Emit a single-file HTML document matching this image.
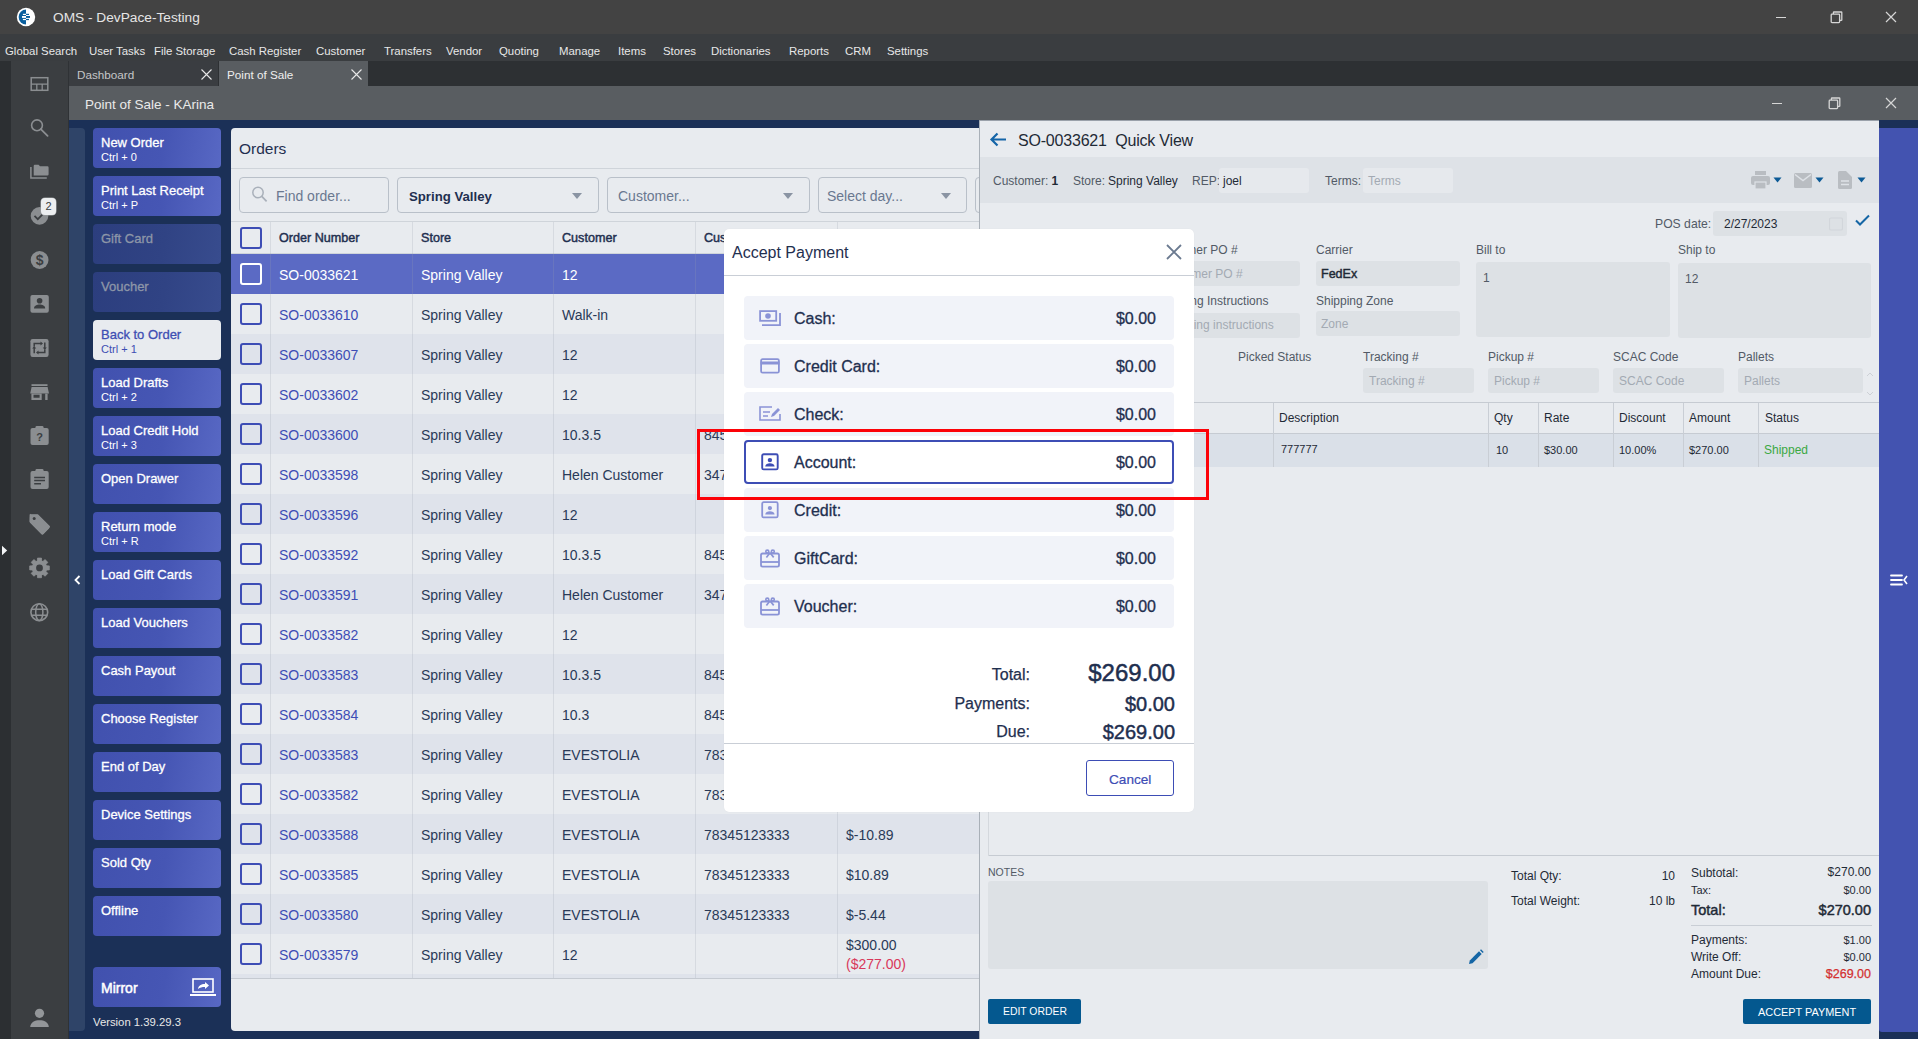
<!DOCTYPE html><html><head><meta charset="utf-8"><style>
*{margin:0;padding:0;box-sizing:border-box}
html,body{width:1918px;height:1039px;overflow:hidden;background:#1b3057;font-family:"Liberation Sans",sans-serif}
.abs{position:absolute}
.t{position:absolute;white-space:nowrap}
</style></head><body><div class="abs" style="left:0px;top:0px;width:1918px;height:34px;background:#434343"></div>
<svg class="abs" style="left:16px;top:7px" width="20" height="20" viewBox="0 0 20 20">
<circle cx="10" cy="10" r="9.2" fill="#fff"/>
<path d="M10 2.6 A7.4 7.4 0 0 0 10 17.4 Z" fill="#0a5f9e"/>
<rect x="6.9" y="6.8" width="3.1" height="1.2" fill="#fff"/><rect x="6" y="9" width="4" height="1.9" fill="#fff"/><rect x="6.9" y="11.9" width="3.1" height="1.2" fill="#fff"/>
<rect x="10" y="6.8" width="3" height="1.2" fill="#0a5f9e"/><rect x="10" y="9" width="4" height="1.9" fill="#0a5f9e"/><rect x="10" y="11.9" width="3" height="1.2" fill="#0a5f9e"/>
</svg>
<div class="t" style="left:53px;top:9.15px;line-height:17.7px;font-size:13.7px;color:#e6e6e6;font-weight:normal;">OMS - DevPace-Testing</div>
<div class="abs" style="left:1776px;top:16.5px;width:10px;height:1.5px;background:#d6d6d6"></div>
<svg class="abs" style="left:1830px;top:11px" width="13" height="13" viewBox="0 0 13 13"><rect x="1.2" y="3.2" width="8.4" height="8.4" rx="0.8" fill="none" stroke="#d6d6d6" stroke-width="1.3"/><path d="M3.4 3V1.5Q3.4 1 4 1H11.3Q11.8 1 11.8 1.6V8.9Q11.8 9.4 11.2 9.4H9.8" fill="none" stroke="#d6d6d6" stroke-width="1.3"/></svg>
<svg class="abs" style="left:1885px;top:11px" width="12" height="12" viewBox="0 0 12 12"><path d="M1 1L11 11M11 1L1 11" stroke="#d6d6d6" stroke-width="1.2"/></svg>
<div class="abs" style="left:0px;top:34px;width:1918px;height:27px;background:#3a3d40"></div>
<div class="t" style="left:5px;top:43.8px;line-height:15.4px;font-size:11.4px;color:#e8e8e8;font-weight:normal;">Global Search</div>
<div class="t" style="left:89px;top:43.8px;line-height:15.4px;font-size:11.4px;color:#e8e8e8;font-weight:normal;">User Tasks</div>
<div class="t" style="left:154px;top:43.8px;line-height:15.4px;font-size:11.4px;color:#e8e8e8;font-weight:normal;">File Storage</div>
<div class="t" style="left:229px;top:43.8px;line-height:15.4px;font-size:11.4px;color:#e8e8e8;font-weight:normal;">Cash Register</div>
<div class="t" style="left:316px;top:43.8px;line-height:15.4px;font-size:11.4px;color:#e8e8e8;font-weight:normal;">Customer</div>
<div class="t" style="left:384px;top:43.8px;line-height:15.4px;font-size:11.4px;color:#e8e8e8;font-weight:normal;">Transfers</div>
<div class="t" style="left:446px;top:43.8px;line-height:15.4px;font-size:11.4px;color:#e8e8e8;font-weight:normal;">Vendor</div>
<div class="t" style="left:499px;top:43.8px;line-height:15.4px;font-size:11.4px;color:#e8e8e8;font-weight:normal;">Quoting</div>
<div class="t" style="left:559px;top:43.8px;line-height:15.4px;font-size:11.4px;color:#e8e8e8;font-weight:normal;">Manage</div>
<div class="t" style="left:618px;top:43.8px;line-height:15.4px;font-size:11.4px;color:#e8e8e8;font-weight:normal;">Items</div>
<div class="t" style="left:663px;top:43.8px;line-height:15.4px;font-size:11.4px;color:#e8e8e8;font-weight:normal;">Stores</div>
<div class="t" style="left:711px;top:43.8px;line-height:15.4px;font-size:11.4px;color:#e8e8e8;font-weight:normal;">Dictionaries</div>
<div class="t" style="left:789px;top:43.8px;line-height:15.4px;font-size:11.4px;color:#e8e8e8;font-weight:normal;">Reports</div>
<div class="t" style="left:845px;top:43.8px;line-height:15.4px;font-size:11.4px;color:#e8e8e8;font-weight:normal;">CRM</div>
<div class="t" style="left:887px;top:43.8px;line-height:15.4px;font-size:11.4px;color:#e8e8e8;font-weight:normal;">Settings</div>
<div class="abs" style="left:0px;top:61px;width:11px;height:978px;background:#2c2f32"></div>
<div class="abs" style="left:11px;top:61px;width:58px;height:978px;background:#3b3e41"></div>
<div class="abs" style="left:68px;top:61px;width:1px;height:978px;background:#2f3235"></div>
<svg class="abs" style="left:0px;top:540px" width="11" height="20" viewBox="0 0 11 20"><path d="M2 5.7L7.2 10.5L2 15.2Z" fill="#f2f4f6"/></svg>
<div class="abs" style="left:69px;top:61px;width:1849px;height:25px;background:#2d3033"></div>
<div class="abs" style="left:69px;top:61px;width:149px;height:25px;background:#3a3d41"></div>
<div class="abs" style="left:219px;top:61px;width:149px;height:25px;background:#595d61"></div>
<div class="t" style="left:77px;top:67.15px;line-height:15.7px;font-size:11.7px;color:#c4c6c8;font-weight:normal;">Dashboard</div>
<div class="t" style="left:227px;top:67.15px;line-height:15.7px;font-size:11.7px;color:#eeeeee;font-weight:normal;">Point of Sale</div>
<svg class="abs" style="left:201px;top:69px" width="11" height="11" viewBox="0 0 11 11"><path d="M0.5 0.5L10.5 10.5M10.5 0.5L0.5 10.5" stroke="#e8e8e8" stroke-width="1.1"/></svg>
<svg class="abs" style="left:351px;top:69px" width="11" height="11" viewBox="0 0 11 11"><path d="M0.5 0.5L10.5 10.5M10.5 0.5L0.5 10.5" stroke="#e8e8e8" stroke-width="1.1"/></svg>
<div class="abs" style="left:69px;top:86px;width:1849px;height:34px;background:#595d61"></div>
<div class="t" style="left:85px;top:96.25px;line-height:17.5px;font-size:13.5px;color:#eaeaea;font-weight:normal;">Point of Sale - KArina</div>
<div class="abs" style="left:1772px;top:102.5px;width:10px;height:1.5px;background:#d6d6d6"></div>
<svg class="abs" style="left:1828px;top:97px" width="13" height="13" viewBox="0 0 13 13"><rect x="1.2" y="3.2" width="8.4" height="8.4" rx="0.8" fill="none" stroke="#d6d6d6" stroke-width="1.3"/><path d="M3.4 3V1.5Q3.4 1 4 1H11.3Q11.8 1 11.8 1.6V8.9Q11.8 9.4 11.2 9.4H9.8" fill="none" stroke="#d6d6d6" stroke-width="1.3"/></svg>
<svg class="abs" style="left:1885px;top:97px" width="12" height="12" viewBox="0 0 12 12"><path d="M1 1L11 11M11 1L1 11" stroke="#d6d6d6" stroke-width="1.2"/></svg>
<div class="abs" style="left:69px;top:120px;width:1849px;height:919px;background:#1b3057"></div>
<svg class="abs" style="left:0;top:0" width="69" height="640" viewBox="0 0 69 640">
<rect x="31.2" y="77.7" width="16.6" height="12.6" fill="none" stroke="#8b8e91" stroke-width="1.5"/>
<path d="M31 84.2H48M36.8 84V90.5M42.2 84V90.5" stroke="#8b8e91" stroke-width="1.3"/>
<circle cx="37" cy="125.3" r="5.4" fill="none" stroke="#8b8e91" stroke-width="1.6"/>
<path d="M40.8 129.1L47.6 135.9" stroke="#8b8e91" stroke-width="1.8" stroke-linecap="round"/>
<path d="M33.7 166Q33.7 164.8 34.9 164.8H38.6L40 166.2H47.4Q48.6 166.2 48.6 167.4V174.3Q48.6 175.5 47.4 175.5H33.7Z" fill="#8b8e91"/>
<path d="M30.9 167V177.9H46.8" fill="none" stroke="#8b8e91" stroke-width="1.5"/>
<circle cx="39.5" cy="215.9" r="8.8" fill="#8b8e91"/>
<path d="M34.5 215.8L37.8 219.2L43.8 213.2" fill="none" stroke="#3b3e41" stroke-width="1.7"/>
<circle cx="39.6" cy="260" r="8.9" fill="#8b8e91"/>
<text x="39.6" y="265.3" font-size="14" text-anchor="middle" fill="#3b3e41" font-family="Liberation Sans" font-weight="bold">$</text>
<rect x="30.4" y="295" width="18.4" height="17.7" rx="2" fill="#8b8e91"/>
<circle cx="39.6" cy="300.8" r="2.8" fill="#3b3e41"/>
<path d="M34 308.6C34 305.6 37 304.6 39.6 304.6C42.2 304.6 45.2 305.6 45.2 308.6Z" fill="#3b3e41"/>
<rect x="30.4" y="339" width="18.2" height="17.9" rx="2.2" fill="#8b8e91"/>
<path d="M34.2 346.5V343.4H41" fill="none" stroke="#3b3e41" stroke-width="1.5"/><path d="M40.5 341.4L43 343.4L40.5 345.4Z" fill="#3b3e41"/>
<path d="M44.8 342.6V348" fill="none" stroke="#3b3e41" stroke-width="1.5"/><path d="M42.8 347.4L44.8 350L46.8 347.4Z" fill="#3b3e41"/>
<path d="M44.8 349.4V352.5H38" fill="none" stroke="#3b3e41" stroke-width="1.5"/><path d="M38.5 350.5L36 352.5L38.5 354.5Z" fill="#3b3e41"/>
<path d="M34.2 353.3V348" fill="none" stroke="#3b3e41" stroke-width="1.5"/><path d="M32.2 348.6L34.2 346L36.2 348.6Z" fill="#3b3e41"/>
<rect x="31.5" y="384.2" width="16" height="1.8" fill="#8b8e91"/>
<path d="M31.6 386.9H47.6L49 393.6H30.2Z" fill="#8b8e91"/>
<path d="M31.4 393.6H41.7V400H31.4Z M33.5 394.7V397.8H39.6V394.7Z" fill="#8b8e91" fill-rule="evenodd"/>
<rect x="45.2" y="393.6" width="2.4" height="6.4" fill="#8b8e91"/>
<rect x="30.5" y="428" width="18.2" height="17" rx="2" fill="#8b8e91"/>
<rect x="35.5" y="426" width="8" height="4" rx="1.2" fill="#8b8e91"/>
<text x="39.6" y="441" font-size="11" text-anchor="middle" fill="#3b3e41" font-family="Liberation Sans" font-weight="bold">?</text>
<rect x="30.5" y="471" width="18.2" height="18" rx="2" fill="#8b8e91"/>
<rect x="35.5" y="469" width="8" height="4" rx="1.2" fill="#8b8e91"/>
<path d="M34.2 477.4H45M34.2 480.6H45M34.2 483.8H41" stroke="#3b3e41" stroke-width="1.5"/>
<path d="M30.2 516.2Q29 515 30.2 513.8L31.3 514.7H37.5L49 526.2Q50 527.4 49 528.6L43.6 534Q42.4 535 41.2 534L29.8 522.6V516.2Z" fill="#8b8e91"/>
<path d="M30.5 515H37.6L49.2 526.6L42.4 533.6L30.3 521.5Z" fill="#8b8e91" stroke="#8b8e91" stroke-width="1.6" stroke-linejoin="round"/>
<circle cx="34.2" cy="518.6" r="1.5" fill="#3b3e41"/>
<polygon points="37.37,561.02 37.51,558.10 41.49,558.10 41.63,561.02 42.86,561.53 45.03,559.57 47.83,562.37 45.87,564.54 46.38,565.77 49.30,565.91 49.30,569.89 46.38,570.03 45.87,571.26 47.83,573.43 45.03,576.23 42.86,574.27 41.63,574.78 41.49,577.70 37.51,577.70 37.37,574.78 36.14,574.27 33.97,576.23 31.17,573.43 33.13,571.26 32.62,570.03 29.70,569.89 29.70,565.91 32.62,565.77 33.13,564.54 31.17,562.37 33.97,559.57 36.14,561.53" fill="#8b8e91" stroke="#8b8e91" stroke-width="0.8" stroke-linejoin="round"/>
<circle cx="39.5" cy="567.9" r="7.4" fill="#8b8e91"/>
<circle cx="39.5" cy="567.9" r="3.4" fill="#3b3e41"/>
<circle cx="39.3" cy="612.2" r="8.4" fill="none" stroke="#8b8e91" stroke-width="1.6"/>
<ellipse cx="39.3" cy="612.2" rx="3.6" ry="8.4" fill="none" stroke="#8b8e91" stroke-width="1.5"/>
<path d="M31.5 609.2H47.1M31.5 615.2H47.1" stroke="#8b8e91" stroke-width="1.5"/>
</svg>
<div class="abs" style="left:41px;top:198px;width:15px;height:17px;border-radius:4px;background:#eceef0;box-shadow:0 0 0 0.6px #9a9da0;font-size:11px;line-height:17px;text-align:center;color:#3a3d41">2</div>
<svg class="abs" style="left:29px;top:1008px" width="21" height="20" viewBox="0 0 21 20"><circle cx="10.5" cy="5.3" r="4.6" fill="#939699"/><path d="M1.2 19C1.5 14 6 12.2 10.5 12.2C15 12.2 19.5 14 19.8 19Z" fill="#939699"/></svg>
<div class="abs" style="left:69px;top:128px;width:16px;height:903px;background:#2f4468;border-radius:0 4px 4px 0"></div>
<svg class="abs" style="left:74px;top:575px" width="7" height="10" viewBox="0 0 7 10"><path d="M5.5 1L1.5 5L5.5 9" fill="none" stroke="#fff" stroke-width="1.8"/></svg>
<div class="abs" style="left:93px;top:128px;width:128px;height:40px;background:linear-gradient(100deg,#4151ae 0%,#4656b4 55%,#5868c4 100%);border-radius:4px"></div>
<div class="t" style="left:101px;top:133.5px;line-height:17px;font-size:13px;color:#ffffff;font-weight:normal;-webkit-text-stroke:0.3px #ffffff">New Order</div>
<div class="t" style="left:101px;top:149.5px;line-height:15px;font-size:11px;color:#ffffff;font-weight:normal;">Ctrl + 0</div>
<div class="abs" style="left:93px;top:176px;width:128px;height:40px;background:linear-gradient(100deg,#4151ae 0%,#4656b4 55%,#5868c4 100%);border-radius:4px"></div>
<div class="t" style="left:101px;top:181.5px;line-height:17px;font-size:13px;color:#ffffff;font-weight:normal;-webkit-text-stroke:0.3px #ffffff">Print Last Receipt</div>
<div class="t" style="left:101px;top:197.5px;line-height:15px;font-size:11px;color:#ffffff;font-weight:normal;">Ctrl + P</div>
<div class="abs" style="left:93px;top:224px;width:128px;height:40px;background:linear-gradient(100deg,#2c3e7e 0%,#304384 55%,#384c8e 100%);border-radius:4px"></div>
<div class="t" style="left:101px;top:229.5px;line-height:17px;font-size:13px;color:#8d96a8;font-weight:normal;-webkit-text-stroke:0.3px #8d96a8">Gift Card</div>
<div class="abs" style="left:93px;top:272px;width:128px;height:40px;background:linear-gradient(100deg,#2c3e7e 0%,#304384 55%,#384c8e 100%);border-radius:4px"></div>
<div class="t" style="left:101px;top:277.5px;line-height:17px;font-size:13px;color:#8d96a8;font-weight:normal;-webkit-text-stroke:0.3px #8d96a8">Voucher</div>
<div class="abs" style="left:93px;top:320px;width:128px;height:40px;background:#e8ebef;border-radius:4px"></div>
<div class="t" style="left:101px;top:325.5px;line-height:17px;font-size:13px;color:#3e4eb3;font-weight:normal;-webkit-text-stroke:0.3px #3e4eb3">Back to Order</div>
<div class="t" style="left:101px;top:341.5px;line-height:15px;font-size:11px;color:#3e4eb3;font-weight:normal;">Ctrl + 1</div>
<div class="abs" style="left:93px;top:368px;width:128px;height:40px;background:linear-gradient(100deg,#4151ae 0%,#4656b4 55%,#5868c4 100%);border-radius:4px"></div>
<div class="t" style="left:101px;top:373.5px;line-height:17px;font-size:13px;color:#ffffff;font-weight:normal;-webkit-text-stroke:0.3px #ffffff">Load Drafts</div>
<div class="t" style="left:101px;top:389.5px;line-height:15px;font-size:11px;color:#ffffff;font-weight:normal;">Ctrl + 2</div>
<div class="abs" style="left:93px;top:416px;width:128px;height:40px;background:linear-gradient(100deg,#4151ae 0%,#4656b4 55%,#5868c4 100%);border-radius:4px"></div>
<div class="t" style="left:101px;top:421.5px;line-height:17px;font-size:13px;color:#ffffff;font-weight:normal;-webkit-text-stroke:0.3px #ffffff">Load Credit Hold</div>
<div class="t" style="left:101px;top:437.5px;line-height:15px;font-size:11px;color:#ffffff;font-weight:normal;">Ctrl + 3</div>
<div class="abs" style="left:93px;top:464px;width:128px;height:40px;background:linear-gradient(100deg,#4151ae 0%,#4656b4 55%,#5868c4 100%);border-radius:4px"></div>
<div class="t" style="left:101px;top:469.5px;line-height:17px;font-size:13px;color:#ffffff;font-weight:normal;-webkit-text-stroke:0.3px #ffffff">Open Drawer</div>
<div class="abs" style="left:93px;top:512px;width:128px;height:40px;background:linear-gradient(100deg,#4151ae 0%,#4656b4 55%,#5868c4 100%);border-radius:4px"></div>
<div class="t" style="left:101px;top:517.5px;line-height:17px;font-size:13px;color:#ffffff;font-weight:normal;-webkit-text-stroke:0.3px #ffffff">Return mode</div>
<div class="t" style="left:101px;top:533.5px;line-height:15px;font-size:11px;color:#ffffff;font-weight:normal;">Ctrl + R</div>
<div class="abs" style="left:93px;top:560px;width:128px;height:40px;background:linear-gradient(100deg,#4151ae 0%,#4656b4 55%,#5868c4 100%);border-radius:4px"></div>
<div class="t" style="left:101px;top:565.5px;line-height:17px;font-size:13px;color:#ffffff;font-weight:normal;-webkit-text-stroke:0.3px #ffffff">Load Gift Cards</div>
<div class="abs" style="left:93px;top:608px;width:128px;height:40px;background:linear-gradient(100deg,#4151ae 0%,#4656b4 55%,#5868c4 100%);border-radius:4px"></div>
<div class="t" style="left:101px;top:613.5px;line-height:17px;font-size:13px;color:#ffffff;font-weight:normal;-webkit-text-stroke:0.3px #ffffff">Load Vouchers</div>
<div class="abs" style="left:93px;top:656px;width:128px;height:40px;background:linear-gradient(100deg,#4151ae 0%,#4656b4 55%,#5868c4 100%);border-radius:4px"></div>
<div class="t" style="left:101px;top:661.5px;line-height:17px;font-size:13px;color:#ffffff;font-weight:normal;-webkit-text-stroke:0.3px #ffffff">Cash Payout</div>
<div class="abs" style="left:93px;top:704px;width:128px;height:40px;background:linear-gradient(100deg,#4151ae 0%,#4656b4 55%,#5868c4 100%);border-radius:4px"></div>
<div class="t" style="left:101px;top:709.5px;line-height:17px;font-size:13px;color:#ffffff;font-weight:normal;-webkit-text-stroke:0.3px #ffffff">Choose Register</div>
<div class="abs" style="left:93px;top:752px;width:128px;height:40px;background:linear-gradient(100deg,#4151ae 0%,#4656b4 55%,#5868c4 100%);border-radius:4px"></div>
<div class="t" style="left:101px;top:757.5px;line-height:17px;font-size:13px;color:#ffffff;font-weight:normal;-webkit-text-stroke:0.3px #ffffff">End of Day</div>
<div class="abs" style="left:93px;top:800px;width:128px;height:40px;background:linear-gradient(100deg,#4151ae 0%,#4656b4 55%,#5868c4 100%);border-radius:4px"></div>
<div class="t" style="left:101px;top:805.5px;line-height:17px;font-size:13px;color:#ffffff;font-weight:normal;-webkit-text-stroke:0.3px #ffffff">Device Settings</div>
<div class="abs" style="left:93px;top:848px;width:128px;height:40px;background:linear-gradient(100deg,#4151ae 0%,#4656b4 55%,#5868c4 100%);border-radius:4px"></div>
<div class="t" style="left:101px;top:853.5px;line-height:17px;font-size:13px;color:#ffffff;font-weight:normal;-webkit-text-stroke:0.3px #ffffff">Sold Qty</div>
<div class="abs" style="left:93px;top:896px;width:128px;height:40px;background:linear-gradient(100deg,#4151ae 0%,#4656b4 55%,#5868c4 100%);border-radius:4px"></div>
<div class="t" style="left:101px;top:901.5px;line-height:17px;font-size:13px;color:#ffffff;font-weight:normal;-webkit-text-stroke:0.3px #ffffff">Offline</div>
<div class="abs" style="left:93px;top:967px;width:128px;height:40px;background:linear-gradient(100deg,#4151ae 0%,#4656b4 55%,#5868c4 100%);border-radius:4px"></div>
<div class="t" style="left:101px;top:979.0px;line-height:18px;font-size:14px;color:#fff;font-weight:normal;-webkit-text-stroke:0.5px #fff">Mirror</div>
<svg class="abs" style="left:189.5px;top:978px" width="26" height="19" viewBox="0 0 26 19"><rect x="3" y="1" width="20" height="13" fill="none" stroke="#fff" stroke-width="1.6"/><rect x="0" y="16" width="26" height="2" fill="#fff"/><path d="M8 11C8.5 7.5 11 6 15 6V4L19 7.5L15 11V9C12 9 10 9.5 8 11Z" fill="#fff"/></svg>
<div class="t" style="left:93px;top:1015.35px;line-height:15.3px;font-size:11.3px;color:#e8e8e8;font-weight:normal;">Version 1.39.29.3</div>
<div class="abs" style="left:231px;top:128px;width:748px;height:903px;background:#e8ebef;border-radius:4px 0 0 4px"></div>
<div class="t" style="left:239px;top:139.25px;line-height:19.5px;font-size:15.5px;color:#1f2f4f;font-weight:normal;">Orders</div>
<div class="abs" style="left:231px;top:168px;width:748px;height:1px;background:#cfd4da"></div>
<div class="abs" style="left:239px;top:177px;width:150px;height:36px;border:1px solid #b9c0c9;border-radius:4px;"></div>
<svg class="abs" style="left:251px;top:186px" width="17" height="17" viewBox="0 0 17 17"><circle cx="7" cy="6.5" r="5.2" fill="none" stroke="#a9b0ba" stroke-width="1.5"/><path d="M10.8 10.4L15.6 15.4" stroke="#a9b0ba" stroke-width="1.7"/></svg>
<div class="t" style="left:276px;top:187.0px;line-height:18px;font-size:14px;color:#6a7890;font-weight:normal;">Find order...</div>
<div class="abs" style="left:397px;top:177px;width:202px;height:36px;border:1px solid #b9c0c9;border-radius:4px;"></div>
<div class="t" style="left:409px;top:188.4px;line-height:17.2px;font-size:13.2px;color:#1f2f4f;font-weight:bold;">Spring Valley</div>
<svg class="abs" style="left:572px;top:193px" width="10" height="6" viewBox="0 0 10 6"><path d="M0 0H10L5 6Z" fill="#8a94a3"/></svg>
<div class="abs" style="left:607px;top:177px;width:203px;height:36px;border:1px solid #b9c0c9;border-radius:4px;"></div>
<div class="t" style="left:618px;top:187.0px;line-height:18px;font-size:14px;color:#6a7890;font-weight:normal;">Customer...</div>
<svg class="abs" style="left:783px;top:193px" width="10" height="6" viewBox="0 0 10 6"><path d="M0 0H10L5 6Z" fill="#8a94a3"/></svg>
<div class="abs" style="left:818px;top:177px;width:149px;height:36px;border:1px solid #b9c0c9;border-radius:4px;"></div>
<div class="t" style="left:827px;top:187.0px;line-height:18px;font-size:14px;color:#6a7890;font-weight:normal;">Select day...</div>
<svg class="abs" style="left:941px;top:193px" width="10" height="6" viewBox="0 0 10 6"><path d="M0 0H10L5 6Z" fill="#8a94a3"/></svg>
<div class="abs" style="left:975px;top:177px;width:20px;height:36px;border:1px solid #b9c0c9;border-radius:4px;"></div>
<div class="abs" style="left:231px;top:221px;width:748px;height:1px;background:#cfd4da"></div>
<div class="t" style="left:279px;top:229.7px;line-height:16.6px;font-size:12.6px;color:#1f2f4f;font-weight:normal;-webkit-text-stroke:0.45px #1f2f4f">Order Number</div>
<div class="t" style="left:421px;top:229.7px;line-height:16.6px;font-size:12.6px;color:#1f2f4f;font-weight:normal;-webkit-text-stroke:0.45px #1f2f4f">Store</div>
<div class="t" style="left:562px;top:229.7px;line-height:16.6px;font-size:12.6px;color:#1f2f4f;font-weight:normal;-webkit-text-stroke:0.45px #1f2f4f">Customer</div>
<div class="t" style="left:704px;top:229.7px;line-height:16.6px;font-size:12.6px;color:#1f2f4f;font-weight:normal;-webkit-text-stroke:0.45px #1f2f4f">Customer Phone</div>
<div class="t" style="left:846px;top:229.7px;line-height:16.6px;font-size:12.6px;color:#1f2f4f;font-weight:normal;-webkit-text-stroke:0.45px #1f2f4f">Total</div>
<div class="abs" style="left:240px;top:227px;width:22px;height:22px;border:2.5px solid #3d4db5;border-radius:3px;background:none"></div>
<div class="abs" style="left:231px;top:253px;width:748px;height:1px;background:#cfd4da"></div>
<div class="abs" style="left:231px;top:254px;width:748px;height:40px;background:#5b6ac4"></div>
<div class="abs" style="left:240px;top:263px;width:22px;height:22px;border:2.5px solid #ffffff;border-radius:3px;background:none"></div>
<div class="t" style="left:279px;top:266.0px;line-height:18px;font-size:14px;color:#ffffff;font-weight:normal;">SO-0033621</div>
<div class="t" style="left:421px;top:266.0px;line-height:18px;font-size:14px;color:#ffffff;font-weight:normal;">Spring Valley</div>
<div class="t" style="left:562px;top:266.0px;line-height:18px;font-size:14px;color:#ffffff;font-weight:normal;">12</div>
<div class="abs" style="left:231px;top:294px;width:748px;height:40px;background:#e8ebef"></div>
<div class="abs" style="left:240px;top:303px;width:22px;height:22px;border:2.5px solid #3d4db5;border-radius:3px;background:none"></div>
<div class="t" style="left:279px;top:306.0px;line-height:18px;font-size:14px;color:#3d4db5;font-weight:normal;">SO-0033610</div>
<div class="t" style="left:421px;top:306.0px;line-height:18px;font-size:14px;color:#2a3a58;font-weight:normal;">Spring Valley</div>
<div class="t" style="left:562px;top:306.0px;line-height:18px;font-size:14px;color:#2a3a58;font-weight:normal;">Walk-in</div>
<div class="abs" style="left:231px;top:334px;width:748px;height:40px;background:#dfe3eb"></div>
<div class="abs" style="left:240px;top:343px;width:22px;height:22px;border:2.5px solid #3d4db5;border-radius:3px;background:none"></div>
<div class="t" style="left:279px;top:346.0px;line-height:18px;font-size:14px;color:#3d4db5;font-weight:normal;">SO-0033607</div>
<div class="t" style="left:421px;top:346.0px;line-height:18px;font-size:14px;color:#2a3a58;font-weight:normal;">Spring Valley</div>
<div class="t" style="left:562px;top:346.0px;line-height:18px;font-size:14px;color:#2a3a58;font-weight:normal;">12</div>
<div class="abs" style="left:231px;top:374px;width:748px;height:40px;background:#e8ebef"></div>
<div class="abs" style="left:240px;top:383px;width:22px;height:22px;border:2.5px solid #3d4db5;border-radius:3px;background:none"></div>
<div class="t" style="left:279px;top:386.0px;line-height:18px;font-size:14px;color:#3d4db5;font-weight:normal;">SO-0033602</div>
<div class="t" style="left:421px;top:386.0px;line-height:18px;font-size:14px;color:#2a3a58;font-weight:normal;">Spring Valley</div>
<div class="t" style="left:562px;top:386.0px;line-height:18px;font-size:14px;color:#2a3a58;font-weight:normal;">12</div>
<div class="abs" style="left:231px;top:414px;width:748px;height:40px;background:#dfe3eb"></div>
<div class="abs" style="left:240px;top:423px;width:22px;height:22px;border:2.5px solid #3d4db5;border-radius:3px;background:none"></div>
<div class="t" style="left:279px;top:426.0px;line-height:18px;font-size:14px;color:#3d4db5;font-weight:normal;">SO-0033600</div>
<div class="t" style="left:421px;top:426.0px;line-height:18px;font-size:14px;color:#2a3a58;font-weight:normal;">Spring Valley</div>
<div class="t" style="left:562px;top:426.0px;line-height:18px;font-size:14px;color:#2a3a58;font-weight:normal;">10.3.5</div>
<div class="t" style="left:704px;top:426.0px;line-height:18px;font-size:14px;color:#2a3a58;font-weight:normal;">84512</div>
<div class="abs" style="left:231px;top:454px;width:748px;height:40px;background:#e8ebef"></div>
<div class="abs" style="left:240px;top:463px;width:22px;height:22px;border:2.5px solid #3d4db5;border-radius:3px;background:none"></div>
<div class="t" style="left:279px;top:466.0px;line-height:18px;font-size:14px;color:#3d4db5;font-weight:normal;">SO-0033598</div>
<div class="t" style="left:421px;top:466.0px;line-height:18px;font-size:14px;color:#2a3a58;font-weight:normal;">Spring Valley</div>
<div class="t" style="left:562px;top:466.0px;line-height:18px;font-size:14px;color:#2a3a58;font-weight:normal;">Helen Customer</div>
<div class="t" style="left:704px;top:466.0px;line-height:18px;font-size:14px;color:#2a3a58;font-weight:normal;">34712</div>
<div class="abs" style="left:231px;top:494px;width:748px;height:40px;background:#dfe3eb"></div>
<div class="abs" style="left:240px;top:503px;width:22px;height:22px;border:2.5px solid #3d4db5;border-radius:3px;background:none"></div>
<div class="t" style="left:279px;top:506.0px;line-height:18px;font-size:14px;color:#3d4db5;font-weight:normal;">SO-0033596</div>
<div class="t" style="left:421px;top:506.0px;line-height:18px;font-size:14px;color:#2a3a58;font-weight:normal;">Spring Valley</div>
<div class="t" style="left:562px;top:506.0px;line-height:18px;font-size:14px;color:#2a3a58;font-weight:normal;">12</div>
<div class="abs" style="left:231px;top:534px;width:748px;height:40px;background:#e8ebef"></div>
<div class="abs" style="left:240px;top:543px;width:22px;height:22px;border:2.5px solid #3d4db5;border-radius:3px;background:none"></div>
<div class="t" style="left:279px;top:546.0px;line-height:18px;font-size:14px;color:#3d4db5;font-weight:normal;">SO-0033592</div>
<div class="t" style="left:421px;top:546.0px;line-height:18px;font-size:14px;color:#2a3a58;font-weight:normal;">Spring Valley</div>
<div class="t" style="left:562px;top:546.0px;line-height:18px;font-size:14px;color:#2a3a58;font-weight:normal;">10.3.5</div>
<div class="t" style="left:704px;top:546.0px;line-height:18px;font-size:14px;color:#2a3a58;font-weight:normal;">84512</div>
<div class="abs" style="left:231px;top:574px;width:748px;height:40px;background:#dfe3eb"></div>
<div class="abs" style="left:240px;top:583px;width:22px;height:22px;border:2.5px solid #3d4db5;border-radius:3px;background:none"></div>
<div class="t" style="left:279px;top:586.0px;line-height:18px;font-size:14px;color:#3d4db5;font-weight:normal;">SO-0033591</div>
<div class="t" style="left:421px;top:586.0px;line-height:18px;font-size:14px;color:#2a3a58;font-weight:normal;">Spring Valley</div>
<div class="t" style="left:562px;top:586.0px;line-height:18px;font-size:14px;color:#2a3a58;font-weight:normal;">Helen Customer</div>
<div class="t" style="left:704px;top:586.0px;line-height:18px;font-size:14px;color:#2a3a58;font-weight:normal;">34712</div>
<div class="abs" style="left:231px;top:614px;width:748px;height:40px;background:#e8ebef"></div>
<div class="abs" style="left:240px;top:623px;width:22px;height:22px;border:2.5px solid #3d4db5;border-radius:3px;background:none"></div>
<div class="t" style="left:279px;top:626.0px;line-height:18px;font-size:14px;color:#3d4db5;font-weight:normal;">SO-0033582</div>
<div class="t" style="left:421px;top:626.0px;line-height:18px;font-size:14px;color:#2a3a58;font-weight:normal;">Spring Valley</div>
<div class="t" style="left:562px;top:626.0px;line-height:18px;font-size:14px;color:#2a3a58;font-weight:normal;">12</div>
<div class="abs" style="left:231px;top:654px;width:748px;height:40px;background:#dfe3eb"></div>
<div class="abs" style="left:240px;top:663px;width:22px;height:22px;border:2.5px solid #3d4db5;border-radius:3px;background:none"></div>
<div class="t" style="left:279px;top:666.0px;line-height:18px;font-size:14px;color:#3d4db5;font-weight:normal;">SO-0033583</div>
<div class="t" style="left:421px;top:666.0px;line-height:18px;font-size:14px;color:#2a3a58;font-weight:normal;">Spring Valley</div>
<div class="t" style="left:562px;top:666.0px;line-height:18px;font-size:14px;color:#2a3a58;font-weight:normal;">10.3.5</div>
<div class="t" style="left:704px;top:666.0px;line-height:18px;font-size:14px;color:#2a3a58;font-weight:normal;">84512</div>
<div class="abs" style="left:231px;top:694px;width:748px;height:40px;background:#e8ebef"></div>
<div class="abs" style="left:240px;top:703px;width:22px;height:22px;border:2.5px solid #3d4db5;border-radius:3px;background:none"></div>
<div class="t" style="left:279px;top:706.0px;line-height:18px;font-size:14px;color:#3d4db5;font-weight:normal;">SO-0033584</div>
<div class="t" style="left:421px;top:706.0px;line-height:18px;font-size:14px;color:#2a3a58;font-weight:normal;">Spring Valley</div>
<div class="t" style="left:562px;top:706.0px;line-height:18px;font-size:14px;color:#2a3a58;font-weight:normal;">10.3</div>
<div class="t" style="left:704px;top:706.0px;line-height:18px;font-size:14px;color:#2a3a58;font-weight:normal;">84512</div>
<div class="abs" style="left:231px;top:734px;width:748px;height:40px;background:#dfe3eb"></div>
<div class="abs" style="left:240px;top:743px;width:22px;height:22px;border:2.5px solid #3d4db5;border-radius:3px;background:none"></div>
<div class="t" style="left:279px;top:746.0px;line-height:18px;font-size:14px;color:#3d4db5;font-weight:normal;">SO-0033583</div>
<div class="t" style="left:421px;top:746.0px;line-height:18px;font-size:14px;color:#2a3a58;font-weight:normal;">Spring Valley</div>
<div class="t" style="left:562px;top:746.0px;line-height:18px;font-size:14px;color:#2a3a58;font-weight:normal;">EVESTOLIA</div>
<div class="t" style="left:704px;top:746.0px;line-height:18px;font-size:14px;color:#2a3a58;font-weight:normal;">78345123333</div>
<div class="abs" style="left:231px;top:774px;width:748px;height:40px;background:#e8ebef"></div>
<div class="abs" style="left:240px;top:783px;width:22px;height:22px;border:2.5px solid #3d4db5;border-radius:3px;background:none"></div>
<div class="t" style="left:279px;top:786.0px;line-height:18px;font-size:14px;color:#3d4db5;font-weight:normal;">SO-0033582</div>
<div class="t" style="left:421px;top:786.0px;line-height:18px;font-size:14px;color:#2a3a58;font-weight:normal;">Spring Valley</div>
<div class="t" style="left:562px;top:786.0px;line-height:18px;font-size:14px;color:#2a3a58;font-weight:normal;">EVESTOLIA</div>
<div class="t" style="left:704px;top:786.0px;line-height:18px;font-size:14px;color:#2a3a58;font-weight:normal;">78345123333</div>
<div class="abs" style="left:231px;top:814px;width:748px;height:40px;background:#dfe3eb"></div>
<div class="abs" style="left:240px;top:823px;width:22px;height:22px;border:2.5px solid #3d4db5;border-radius:3px;background:none"></div>
<div class="t" style="left:279px;top:826.0px;line-height:18px;font-size:14px;color:#3d4db5;font-weight:normal;">SO-0033588</div>
<div class="t" style="left:421px;top:826.0px;line-height:18px;font-size:14px;color:#2a3a58;font-weight:normal;">Spring Valley</div>
<div class="t" style="left:562px;top:826.0px;line-height:18px;font-size:14px;color:#2a3a58;font-weight:normal;">EVESTOLIA</div>
<div class="t" style="left:704px;top:826.0px;line-height:18px;font-size:14px;color:#2a3a58;font-weight:normal;">78345123333</div>
<div class="t" style="left:846px;top:826.0px;line-height:18px;font-size:14px;color:#2a3a58;font-weight:normal;">$-10.89</div>
<div class="abs" style="left:231px;top:854px;width:748px;height:40px;background:#e8ebef"></div>
<div class="abs" style="left:240px;top:863px;width:22px;height:22px;border:2.5px solid #3d4db5;border-radius:3px;background:none"></div>
<div class="t" style="left:279px;top:866.0px;line-height:18px;font-size:14px;color:#3d4db5;font-weight:normal;">SO-0033585</div>
<div class="t" style="left:421px;top:866.0px;line-height:18px;font-size:14px;color:#2a3a58;font-weight:normal;">Spring Valley</div>
<div class="t" style="left:562px;top:866.0px;line-height:18px;font-size:14px;color:#2a3a58;font-weight:normal;">EVESTOLIA</div>
<div class="t" style="left:704px;top:866.0px;line-height:18px;font-size:14px;color:#2a3a58;font-weight:normal;">78345123333</div>
<div class="t" style="left:846px;top:866.0px;line-height:18px;font-size:14px;color:#2a3a58;font-weight:normal;">$10.89</div>
<div class="abs" style="left:231px;top:894px;width:748px;height:40px;background:#dfe3eb"></div>
<div class="abs" style="left:240px;top:903px;width:22px;height:22px;border:2.5px solid #3d4db5;border-radius:3px;background:none"></div>
<div class="t" style="left:279px;top:906.0px;line-height:18px;font-size:14px;color:#3d4db5;font-weight:normal;">SO-0033580</div>
<div class="t" style="left:421px;top:906.0px;line-height:18px;font-size:14px;color:#2a3a58;font-weight:normal;">Spring Valley</div>
<div class="t" style="left:562px;top:906.0px;line-height:18px;font-size:14px;color:#2a3a58;font-weight:normal;">EVESTOLIA</div>
<div class="t" style="left:704px;top:906.0px;line-height:18px;font-size:14px;color:#2a3a58;font-weight:normal;">78345123333</div>
<div class="t" style="left:846px;top:906.0px;line-height:18px;font-size:14px;color:#2a3a58;font-weight:normal;">$-5.44</div>
<div class="abs" style="left:231px;top:934px;width:748px;height:40px;background:#e8ebef"></div>
<div class="abs" style="left:240px;top:943px;width:22px;height:22px;border:2.5px solid #3d4db5;border-radius:3px;background:none"></div>
<div class="t" style="left:279px;top:946.0px;line-height:18px;font-size:14px;color:#3d4db5;font-weight:normal;">SO-0033579</div>
<div class="t" style="left:421px;top:946.0px;line-height:18px;font-size:14px;color:#2a3a58;font-weight:normal;">Spring Valley</div>
<div class="t" style="left:562px;top:946.0px;line-height:18px;font-size:14px;color:#2a3a58;font-weight:normal;">12</div>
<div class="t" style="left:846px;top:936.0px;line-height:18px;font-size:14px;color:#2a3a58;font-weight:normal;">$300.00</div>
<div class="t" style="left:846px;top:955.0px;line-height:18px;font-size:14px;color:#d8385a;font-weight:normal;">($277.00)</div>
<div class="abs" style="left:231px;top:974px;width:748px;height:4px;background:#dfe3eb"></div>
<div class="abs" style="left:231px;top:978px;width:748px;height:1px;background:#c5cad1"></div>
<div class="abs" style="left:270px;top:222px;width:1px;height:756px;background:rgba(150,160,175,0.22)"></div>
<div class="abs" style="left:412px;top:222px;width:1px;height:756px;background:rgba(150,160,175,0.22)"></div>
<div class="abs" style="left:553px;top:222px;width:1px;height:756px;background:rgba(150,160,175,0.22)"></div>
<div class="abs" style="left:695px;top:222px;width:1px;height:756px;background:rgba(150,160,175,0.22)"></div>
<div class="abs" style="left:837px;top:222px;width:1px;height:756px;background:rgba(150,160,175,0.22)"></div>
<div class="abs" style="left:979px;top:120px;width:900px;height:919px;background:#e8ebef"></div>
<div class="abs" style="left:979px;top:120px;width:1px;height:919px;background:#a9b0b8"></div>
<div class="abs" style="left:979px;top:120px;width:900px;height:1px;background:#9aa1aa"></div>
<svg class="abs" style="left:989px;top:132px" width="18" height="15" viewBox="0 0 18 15"><path d="M17 7.5H3M8.5 1.5L2.5 7.5L8.5 13.5" fill="none" stroke="#1565a8" stroke-width="2.2"/></svg>
<div class="t" style="left:1018px;top:131.0px;line-height:20px;font-size:16px;color:#1f2a36;font-weight:normal;letter-spacing:-0.2px">SO-0033621&nbsp;&nbsp;Quick View</div>
<div class="abs" style="left:980px;top:157px;width:899px;height:46px;background:#dee2e7"></div>
<div class="t" style="left:993px;top:173.0px;line-height:16px;font-size:12px;color:#525a66;font-weight:normal;">Customer:</div>
<div class="t" style="left:1051.5px;top:173.0px;line-height:16px;font-size:12px;color:#1f2a36;font-weight:bold;">1</div>
<div class="t" style="left:1073px;top:173.0px;line-height:16px;font-size:12px;color:#525a66;font-weight:normal;">Store:</div>
<div class="t" style="left:1108px;top:173.0px;line-height:16px;font-size:12px;color:#1f2a36;font-weight:normal;">Spring Valley</div>
<div class="t" style="left:1192px;top:173.0px;line-height:16px;font-size:12px;color:#525a66;font-weight:normal;">REP:</div>
<div class="abs" style="left:1219px;top:168px;width:90px;height:25px;background:#e6e9ed;border-radius:3px"></div>
<div class="t" style="left:1223px;top:173.0px;line-height:16px;font-size:12px;color:#1f2a36;font-weight:normal;">joel</div>
<div class="t" style="left:1325px;top:173.0px;line-height:16px;font-size:12px;color:#525a66;font-weight:normal;">Terms:</div>
<div class="abs" style="left:1363px;top:168px;width:90px;height:25px;background:#e6e9ed;border-radius:3px"></div>
<div class="t" style="left:1368px;top:173.0px;line-height:16px;font-size:12px;color:#a3aab3;font-weight:normal;">Terms</div>
<svg class="abs" style="left:1751px;top:171px" width="19" height="18" viewBox="0 0 19 18"><rect x="4" y="0" width="11" height="4" fill="#b9bdc2"/><rect x="0" y="5" width="19" height="9" rx="2" fill="#b9bdc2"/><rect x="4" y="11" width="11" height="7" fill="#b9bdc2" stroke="#dee2e7" stroke-width="1.2"/></svg>
<svg class="abs" style="left:1773px;top:177px" width="9" height="6" viewBox="0 0 9 6"><path d="M0.5 0.5H8.5L4.5 5.5Z" fill="#0c5a96"/></svg>
<svg class="abs" style="left:1794px;top:173px" width="18" height="15" viewBox="0 0 18 15"><rect x="0" y="0" width="18" height="15" rx="1.5" fill="#b9bdc2"/><path d="M1 1.5L9 7.5L17 1.5" fill="none" stroke="#dee2e7" stroke-width="1.5"/></svg>
<svg class="abs" style="left:1815px;top:177px" width="9" height="6" viewBox="0 0 9 6"><path d="M0.5 0.5H8.5L4.5 5.5Z" fill="#0c5a96"/></svg>
<svg class="abs" style="left:1838px;top:171px" width="14" height="18" viewBox="0 0 14 18"><path d="M0 1.5Q0 0 1.5 0H8L14 6V16.5Q14 18 12.5 18H1.5Q0 18 0 16.5Z" fill="#b9bdc2"/><path d="M3 10H11M3 13.5H11" stroke="#dee2e7" stroke-width="1.4"/></svg>
<svg class="abs" style="left:1857px;top:177px" width="9" height="6" viewBox="0 0 9 6"><path d="M0.5 0.5H8.5L4.5 5.5Z" fill="#0c5a96"/></svg>
<div class="t" style="left:1655px;top:215.9px;line-height:16.2px;font-size:12.2px;color:#525a66;font-weight:normal;">POS date:</div>
<div class="abs" style="left:1713px;top:211px;width:134px;height:25px;background:#dde1e5;border-radius:3px"></div>
<div class="t" style="left:1724px;top:216.0px;line-height:16px;font-size:12px;color:#1f2a36;font-weight:normal;">2/27/2023</div>
<svg class="abs" style="left:1829px;top:216px" width="14" height="15" viewBox="0 0 14 15"><rect x="0.5" y="2" width="13" height="12" rx="1.5" fill="none" stroke="#d2d6db" stroke-width="1.2"/></svg>
<svg class="abs" style="left:1855px;top:214px" width="15" height="12" viewBox="0 0 15 12"><path d="M1 6.5L5 10.5L14 1.5" fill="none" stroke="#1566a5" stroke-width="2"/></svg>
<div class="t" style="left:1155px;top:242.0px;line-height:16px;font-size:12px;color:#525a66;font-weight:normal;">Customer PO #</div>
<div class="abs" style="left:1160px;top:261px;width:140px;height:25px;background:#dde1e5;border-radius:3px"></div>
<div class="t" style="left:1160px;top:266.0px;line-height:16px;font-size:12px;color:#a3aab3;font-weight:normal;">Customer PO #</div>
<div class="t" style="left:1316px;top:242.0px;line-height:16px;font-size:12px;color:#525a66;font-weight:normal;">Carrier</div>
<div class="abs" style="left:1316px;top:261px;width:144px;height:25px;background:#dde1e5;border-radius:3px"></div>
<div class="t" style="left:1321px;top:265.75px;line-height:16.5px;font-size:12.5px;color:#1f2a36;font-weight:normal;-webkit-text-stroke:0.45px #1f2a36">FedEx</div>
<div class="t" style="left:1157px;top:293.0px;line-height:16px;font-size:12px;color:#525a66;font-weight:normal;">Shipping Instructions</div>
<div class="abs" style="left:1160px;top:313px;width:140px;height:25px;background:#dde1e5;border-radius:3px"></div>
<div class="t" style="left:1163px;top:317.0px;line-height:16px;font-size:12px;color:#a3aab3;font-weight:normal;">Shipping instructions</div>
<div class="t" style="left:1316px;top:293.0px;line-height:16px;font-size:12px;color:#525a66;font-weight:normal;">Shipping Zone</div>
<div class="abs" style="left:1316px;top:311px;width:144px;height:25px;background:#dde1e5;border-radius:3px"></div>
<div class="t" style="left:1321px;top:316.0px;line-height:16px;font-size:12px;color:#a3aab3;font-weight:normal;">Zone</div>
<div class="t" style="left:1476px;top:242.0px;line-height:16px;font-size:12px;color:#525a66;font-weight:normal;">Bill to</div>
<div class="abs" style="left:1476px;top:262px;width:194px;height:75px;background:#dde1e5;border-radius:3px"></div>
<div class="t" style="left:1483px;top:270.0px;line-height:16px;font-size:12px;color:#525a66;font-weight:normal;">1</div>
<div class="t" style="left:1678px;top:242.0px;line-height:16px;font-size:12px;color:#525a66;font-weight:normal;">Ship to</div>
<div class="abs" style="left:1678px;top:263px;width:193px;height:75px;background:#dde1e5;border-radius:3px"></div>
<div class="t" style="left:1685px;top:271.0px;line-height:16px;font-size:12px;color:#525a66;font-weight:normal;">12</div>
<div class="t" style="left:1238px;top:349.0px;line-height:16px;font-size:12px;color:#525a66;font-weight:normal;">Picked Status</div>
<div class="t" style="left:1363px;top:349.0px;line-height:16px;font-size:12px;color:#525a66;font-weight:normal;">Tracking #</div>
<div class="abs" style="left:1363px;top:368px;width:111px;height:25px;background:#dde1e5;border-radius:3px"></div>
<div class="t" style="left:1369px;top:373.0px;line-height:16px;font-size:12px;color:#a3aab3;font-weight:normal;">Tracking #</div>
<div class="t" style="left:1488px;top:349.0px;line-height:16px;font-size:12px;color:#525a66;font-weight:normal;">Pickup #</div>
<div class="abs" style="left:1488px;top:368px;width:111px;height:25px;background:#dde1e5;border-radius:3px"></div>
<div class="t" style="left:1494px;top:373.0px;line-height:16px;font-size:12px;color:#a3aab3;font-weight:normal;">Pickup #</div>
<div class="t" style="left:1613px;top:349.0px;line-height:16px;font-size:12px;color:#525a66;font-weight:normal;">SCAC Code</div>
<div class="abs" style="left:1613px;top:368px;width:111px;height:25px;background:#dde1e5;border-radius:3px"></div>
<div class="t" style="left:1619px;top:373.0px;line-height:16px;font-size:12px;color:#a3aab3;font-weight:normal;">SCAC Code</div>
<div class="t" style="left:1738px;top:349.0px;line-height:16px;font-size:12px;color:#525a66;font-weight:normal;">Pallets</div>
<div class="abs" style="left:1738px;top:368px;width:125px;height:25px;background:#dde1e5;border-radius:3px"></div>
<div class="t" style="left:1744px;top:373.0px;line-height:16px;font-size:12px;color:#a3aab3;font-weight:normal;">Pallets</div>
<svg class="abs" style="left:1866px;top:371px" width="8" height="26" viewBox="0 0 8 26"><path d="M1 5L4 2L7 5M1 21L4 24L7 21" fill="none" stroke="#cdd1d6" stroke-width="1"/></svg>
<div class="abs" style="left:988px;top:402px;width:891px;height:1px;background:#c6cbd2"></div>
<div class="abs" style="left:988px;top:433px;width:891px;height:1px;background:#c6cbd2"></div>
<div class="abs" style="left:988px;top:434px;width:891px;height:33px;background:#dae0e8"></div>
<div class="abs" style="left:1273px;top:403px;width:1px;height:64px;background:#c9ced5"></div>
<div class="abs" style="left:1488px;top:403px;width:1px;height:64px;background:#c9ced5"></div>
<div class="abs" style="left:1538px;top:403px;width:1px;height:64px;background:#c9ced5"></div>
<div class="abs" style="left:1613px;top:403px;width:1px;height:64px;background:#c9ced5"></div>
<div class="abs" style="left:1683px;top:403px;width:1px;height:64px;background:#c9ced5"></div>
<div class="abs" style="left:1758px;top:403px;width:1px;height:64px;background:#c9ced5"></div>
<div class="t" style="left:1279px;top:410.0px;line-height:16px;font-size:12px;color:#1f2a36;font-weight:normal;">Description</div>
<div class="t" style="left:1494px;top:410.0px;line-height:16px;font-size:12px;color:#1f2a36;font-weight:normal;">Qty</div>
<div class="t" style="left:1544px;top:410.0px;line-height:16px;font-size:12px;color:#1f2a36;font-weight:normal;">Rate</div>
<div class="t" style="left:1619px;top:410.0px;line-height:16px;font-size:12px;color:#1f2a36;font-weight:normal;">Discount</div>
<div class="t" style="left:1689px;top:410.0px;line-height:16px;font-size:12px;color:#1f2a36;font-weight:normal;">Amount</div>
<div class="t" style="left:1765px;top:410.0px;line-height:16px;font-size:12px;color:#1f2a36;font-weight:normal;">Status</div>
<div class="t" style="left:1281px;top:441.5px;line-height:15px;font-size:11px;color:#1f2a36;font-weight:normal;">777777</div>
<div class="t" style="left:1496px;top:442.5px;line-height:15px;font-size:11px;color:#1f2a36;font-weight:normal;">10</div>
<div class="t" style="left:1544px;top:442.5px;line-height:15px;font-size:11px;color:#1f2a36;font-weight:normal;">$30.00</div>
<div class="t" style="left:1619px;top:442.5px;line-height:15px;font-size:11px;color:#1f2a36;font-weight:normal;">10.00%</div>
<div class="t" style="left:1689px;top:442.5px;line-height:15px;font-size:11px;color:#1f2a36;font-weight:normal;">$270.00</div>
<div class="t" style="left:1764px;top:442.0px;line-height:16px;font-size:12px;color:#3aa843;font-weight:normal;">Shipped</div>
<div class="abs" style="left:988px;top:855px;width:891px;height:1px;background:#c6cbd2"></div>
<div class="abs" style="left:988px;top:402px;width:1px;height:454px;background:#d4d8dd"></div>
<div class="t" style="left:988px;top:864.75px;line-height:14.5px;font-size:10.5px;color:#525a66;font-weight:normal;">NOTES</div>
<div class="abs" style="left:988px;top:881px;width:500px;height:88px;background:#dde1e5;border-radius:3px"></div>
<svg class="abs" style="left:1468px;top:949px" width="16" height="16" viewBox="0 0 16 16"><path d="M1 15L1.8 11.5L11 2.3L13.7 5L4.5 14.2Z" fill="#1566a5"/><path d="M12 1.3L13 0.3L15.7 3L14.7 4Z" fill="#1566a5"/></svg>
<div class="abs" style="left:988px;top:999px;width:93px;height:25px;background:#04588f;border-radius:2px"></div>
<div class="t" style="left:1003px;top:1004.8px;line-height:14.4px;font-size:10.4px;color:#fff;font-weight:normal;">EDIT ORDER</div>
<div class="t" style="left:1511px;top:868.0px;line-height:16px;font-size:12px;color:#1f2a36;font-weight:normal;">Total Qty:</div>
<div class="t" style="right:243px;top:868.0px;line-height:16px;font-size:12px;color:#1f2a36;font-weight:normal;text-align:right;">10</div>
<div class="t" style="left:1511px;top:893.0px;line-height:16px;font-size:12px;color:#1f2a36;font-weight:normal;">Total Weight:</div>
<div class="t" style="right:243px;top:893.0px;line-height:16px;font-size:12px;color:#1f2a36;font-weight:normal;text-align:right;">10 lb</div>
<div class="t" style="left:1691px;top:865.0px;line-height:16px;font-size:12px;color:#1f2a36;font-weight:normal;">Subtotal:</div>
<div class="t" style="right:47px;top:864.0px;line-height:16px;font-size:12px;color:#1f2a36;font-weight:normal;text-align:right;">$270.00</div>
<div class="t" style="left:1691px;top:882.5px;line-height:15px;font-size:11px;color:#1f2a36;font-weight:normal;">Tax:</div>
<div class="t" style="right:47px;top:882.5px;line-height:15px;font-size:11px;color:#1f2a36;font-weight:normal;text-align:right;">$0.00</div>
<div class="t" style="left:1691px;top:900.75px;line-height:18.5px;font-size:14.5px;color:#1f2a36;font-weight:normal;-webkit-text-stroke:0.45px #1f2a36">Total:</div>
<div class="t" style="right:47px;top:900.75px;line-height:18.5px;font-size:14.5px;color:#1f2a36;font-weight:normal;text-align:right;-webkit-text-stroke:0.45px #1f2a36">$270.00</div>
<div class="abs" style="left:1691px;top:925px;width:181px;height:1px;background:#c9ced5"></div>
<div class="t" style="left:1691px;top:932.0px;line-height:16px;font-size:12px;color:#1f2a36;font-weight:normal;">Payments:</div>
<div class="t" style="right:47px;top:932.5px;line-height:15px;font-size:11px;color:#1f2a36;font-weight:normal;text-align:right;">$1.00</div>
<div class="t" style="left:1691px;top:949.0px;line-height:16px;font-size:12px;color:#1f2a36;font-weight:normal;">Write Off:</div>
<div class="t" style="right:47px;top:949.5px;line-height:15px;font-size:11px;color:#1f2a36;font-weight:normal;text-align:right;">$0.00</div>
<div class="t" style="left:1691px;top:966.0px;line-height:16px;font-size:12px;color:#1f2a36;font-weight:normal;">Amount Due:</div>
<div class="t" style="right:47px;top:965.75px;line-height:16.5px;font-size:12.5px;color:#d33030;font-weight:normal;text-align:right;-webkit-text-stroke:0.25px #d33030">$269.00</div>
<div class="abs" style="left:1743px;top:999px;width:128px;height:25px;background:#04588f;border-radius:2px"></div>
<div class="t" style="left:1758px;top:1004.55px;line-height:14.9px;font-size:10.9px;color:#fff;font-weight:normal;">ACCEPT PAYMENT</div>
<div class="abs" style="left:1879px;top:120px;width:39px;height:919px;background:#1b3057"></div>
<div class="abs" style="left:1879px;top:128px;width:39px;height:904px;background:#4353b0;border-radius:0 0 0 3px"></div>
<svg class="abs" style="left:1890px;top:574px" width="18" height="12" viewBox="0 0 18 12"><path d="M1 1.5H12M1 6H12M1 10.5H12" stroke="#fff" stroke-width="1.8" stroke-linecap="round"/><path d="M17 2L14 6L17 10" fill="none" stroke="#fff" stroke-width="1.6"/></svg>
<div class="abs" style="left:724px;top:229px;width:470px;height:583px;background:#fff;border-radius:5px;box-shadow:0 0 1px rgba(0,0,0,0.08)"></div>
<div class="t" style="left:732px;top:243.0px;line-height:20px;font-size:16px;color:#1f2f4f;font-weight:normal;">Accept Payment</div>
<svg class="abs" style="left:1166px;top:244px" width="16" height="16" viewBox="0 0 16 16"><path d="M1 1L15 15M15 1L1 15" stroke="#6b7a90" stroke-width="1.8"/></svg>
<div class="abs" style="left:724px;top:275px;width:470px;height:1px;background:#c9ced6"></div>
<div class="abs" style="left:744px;top:296px;width:430px;height:44px;background:#f1f3f9;border-radius:4px"></div>
<svg class="abs" style="left:759px;top:309px" width="22" height="20" viewBox="0 0 22 20"><rect x="1.1" y="2.1" width="16.1" height="9.7" fill="none" stroke="#8a93d6" stroke-width="1.8"/><circle cx="9" cy="7" r="2.8" fill="#8a93d6"/><path d="M3 16.1H21V4" fill="none" stroke="#8a93d6" stroke-width="1.8"/></svg>
<div class="t" style="left:794px;top:309.0px;line-height:20px;font-size:16px;color:#1f2f4f;font-weight:normal;-webkit-text-stroke:0.3px #1f2f4f">Cash:</div>
<div class="t" style="right:762px;top:309.0px;line-height:20px;font-size:16px;color:#1f2f4f;font-weight:normal;text-align:right;-webkit-text-stroke:0.3px #1f2f4f">$0.00</div>
<div class="abs" style="left:744px;top:344px;width:430px;height:44px;background:#f1f3f9;border-radius:4px"></div>
<svg class="abs" style="left:759px;top:357px" width="22" height="20" viewBox="0 0 22 20"><rect x="2.1" y="2.2" width="17.8" height="13.5" rx="1.5" fill="none" stroke="#8a93d6" stroke-width="1.8"/><rect x="1.5" y="4.5" width="19" height="3" fill="#8a93d6"/></svg>
<div class="t" style="left:794px;top:357.0px;line-height:20px;font-size:16px;color:#1f2f4f;font-weight:normal;-webkit-text-stroke:0.3px #1f2f4f">Credit Card:</div>
<div class="t" style="right:762px;top:357.0px;line-height:20px;font-size:16px;color:#1f2f4f;font-weight:normal;text-align:right;-webkit-text-stroke:0.3px #1f2f4f">$0.00</div>
<div class="abs" style="left:744px;top:392px;width:430px;height:44px;background:#f1f3f9;border-radius:4px"></div>
<svg class="abs" style="left:759px;top:405px" width="22" height="20" viewBox="0 0 22 20"><path d="M13 2H1V15H21V9" fill="none" stroke="#8a93d6" stroke-width="1.6"/><path d="M4 7H11M4 11H9" stroke="#8a93d6" stroke-width="1.6"/><path d="M12 12L13 9L19 3L21 5L15 11Z" fill="#8a93d6"/></svg>
<div class="t" style="left:794px;top:405.0px;line-height:20px;font-size:16px;color:#1f2f4f;font-weight:normal;-webkit-text-stroke:0.3px #1f2f4f">Check:</div>
<div class="t" style="right:762px;top:405.0px;line-height:20px;font-size:16px;color:#1f2f4f;font-weight:normal;text-align:right;-webkit-text-stroke:0.3px #1f2f4f">$0.00</div>
<div class="abs" style="left:744px;top:440px;width:430px;height:44px;background:#fff;border:2px solid #3d4db5;border-radius:4px"></div>
<svg class="abs" style="left:759px;top:453px" width="22" height="20" viewBox="0 0 22 20"><rect x="3.2" y="1.2" width="15.5" height="15.2" rx="1.5" fill="none" stroke="#3d4db5" stroke-width="1.9"/><circle cx="10.9" cy="7.1" r="2.2" fill="#3d4db5"/><path d="M6.2 13.4C6.4 11 8.6 10.2 10.9 10.2C13.2 10.2 15.4 11 15.6 13.4Z" fill="#3d4db5"/></svg>
<div class="t" style="left:794px;top:453.0px;line-height:20px;font-size:16px;color:#1f2f4f;font-weight:normal;-webkit-text-stroke:0.3px #1f2f4f">Account:</div>
<div class="t" style="right:762px;top:453.0px;line-height:20px;font-size:16px;color:#1f2f4f;font-weight:normal;text-align:right;-webkit-text-stroke:0.3px #1f2f4f">$0.00</div>
<div class="abs" style="left:744px;top:488px;width:430px;height:44px;background:#f1f3f9;border-radius:4px"></div>
<svg class="abs" style="left:759px;top:501px" width="22" height="20" viewBox="0 0 22 20"><rect x="3.2" y="1.2" width="15.5" height="15.2" rx="1.5" fill="none" stroke="#8a93d6" stroke-width="1.8"/><circle cx="10.9" cy="7.1" r="2.1" fill="#8a93d6"/><path d="M6.2 13.4C6.4 11 8.6 10.2 10.9 10.2C13.2 10.2 15.4 11 15.6 13.4Z" fill="#8a93d6"/></svg>
<div class="t" style="left:794px;top:501.0px;line-height:20px;font-size:16px;color:#1f2f4f;font-weight:normal;-webkit-text-stroke:0.3px #1f2f4f">Credit:</div>
<div class="t" style="right:762px;top:501.0px;line-height:20px;font-size:16px;color:#1f2f4f;font-weight:normal;text-align:right;-webkit-text-stroke:0.3px #1f2f4f">$0.00</div>
<div class="abs" style="left:744px;top:536px;width:430px;height:44px;background:#f1f3f9;border-radius:4px"></div>
<svg class="abs" style="left:759px;top:549px" width="22" height="20" viewBox="0 0 22 20"><rect x="2" y="4.5" width="18" height="13.1" rx="1.6" fill="none" stroke="#8a93d6" stroke-width="1.8"/><path d="M2 13H20" stroke="#8a93d6" stroke-width="1.8"/><circle cx="8.3" cy="2.6" r="1.5" fill="none" stroke="#8a93d6" stroke-width="1.6"/><circle cx="13.8" cy="2.6" r="1.5" fill="none" stroke="#8a93d6" stroke-width="1.6"/><path d="M11 3.8L7.4 8.4M11 3.8L14.7 8.4" stroke="#8a93d6" stroke-width="1.7"/></svg>
<div class="t" style="left:794px;top:549.0px;line-height:20px;font-size:16px;color:#1f2f4f;font-weight:normal;-webkit-text-stroke:0.3px #1f2f4f">GiftCard:</div>
<div class="t" style="right:762px;top:549.0px;line-height:20px;font-size:16px;color:#1f2f4f;font-weight:normal;text-align:right;-webkit-text-stroke:0.3px #1f2f4f">$0.00</div>
<div class="abs" style="left:744px;top:584px;width:430px;height:44px;background:#f1f3f9;border-radius:4px"></div>
<svg class="abs" style="left:759px;top:597px" width="22" height="20" viewBox="0 0 22 20"><rect x="2" y="4.5" width="18" height="13.1" rx="1.6" fill="none" stroke="#8a93d6" stroke-width="1.8"/><path d="M2 13H20" stroke="#8a93d6" stroke-width="1.8"/><circle cx="8.3" cy="2.6" r="1.5" fill="none" stroke="#8a93d6" stroke-width="1.6"/><circle cx="13.8" cy="2.6" r="1.5" fill="none" stroke="#8a93d6" stroke-width="1.6"/><path d="M11 3.8L7.4 8.4M11 3.8L14.7 8.4" stroke="#8a93d6" stroke-width="1.7"/></svg>
<div class="t" style="left:794px;top:597.0px;line-height:20px;font-size:16px;color:#1f2f4f;font-weight:normal;-webkit-text-stroke:0.3px #1f2f4f">Voucher:</div>
<div class="t" style="right:762px;top:597.0px;line-height:20px;font-size:16px;color:#1f2f4f;font-weight:normal;text-align:right;-webkit-text-stroke:0.3px #1f2f4f">$0.00</div>
<div class="t" style="right:888px;top:664.5px;line-height:20px;font-size:16px;color:#1f2f4f;font-weight:normal;text-align:right;-webkit-text-stroke:0.25px #1f2f4f">Total:</div>
<div class="t" style="right:743px;top:658.5px;line-height:28px;font-size:24px;color:#1f2f4f;font-weight:normal;text-align:right;-webkit-text-stroke:0.5px #1f2f4f">$269.00</div>
<div class="t" style="right:888px;top:693.5px;line-height:20px;font-size:16px;color:#1f2f4f;font-weight:normal;text-align:right;-webkit-text-stroke:0.25px #1f2f4f">Payments:</div>
<div class="t" style="right:743px;top:691.5px;line-height:24px;font-size:20px;color:#1f2f4f;font-weight:normal;text-align:right;-webkit-text-stroke:0.45px #1f2f4f">$0.00</div>
<div class="t" style="right:888px;top:721.5px;line-height:20px;font-size:16px;color:#1f2f4f;font-weight:normal;text-align:right;-webkit-text-stroke:0.25px #1f2f4f">Due:</div>
<div class="t" style="right:743px;top:719.5px;line-height:24px;font-size:20px;color:#1f2f4f;font-weight:normal;text-align:right;-webkit-text-stroke:0.45px #1f2f4f">$269.00</div>
<div class="abs" style="left:724px;top:743px;width:470px;height:1px;background:#c9ced6"></div>
<div class="abs" style="left:1086px;top:760px;width:88px;height:36px;border:1px solid #3d4db5;border-radius:3px"></div>
<div class="t" style="left:1109px;top:770.7px;line-height:17.6px;font-size:13.6px;color:#3d4db5;font-weight:normal;-webkit-text-stroke:0.2px #3d4db5">Cancel</div>
<div class="abs" style="left:697px;top:429px;width:512px;height:71px;border:3px solid #fc0208"></div></body></html>
